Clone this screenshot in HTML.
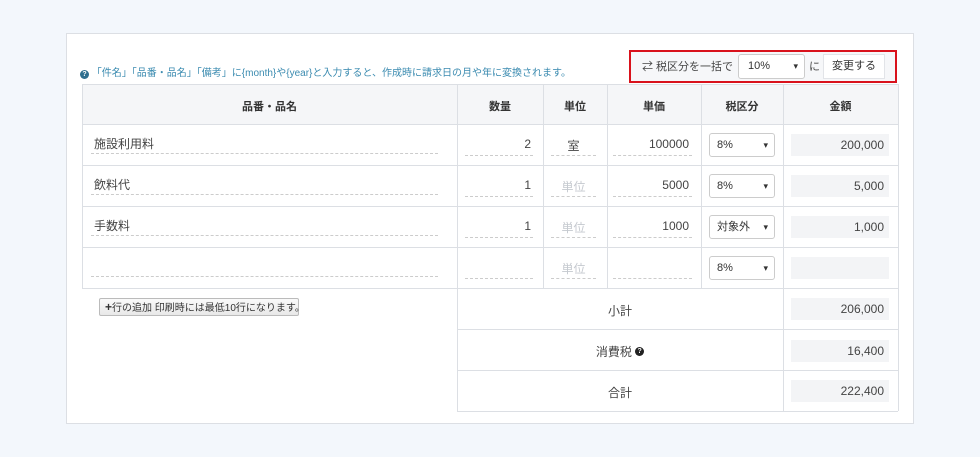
<!DOCTYPE html>
<html><head><meta charset="utf-8"><style>
*{box-sizing:border-box;margin:0;padding:0}
body{width:980px;height:457px;background:#f3f7fc;font-family:"Liberation Sans","Noto Sans CJK JP",sans-serif;position:relative;overflow:hidden;color:#333}
.a{position:absolute}
.panel{left:66px;top:33px;width:848px;height:391px;background:#fff;border:1px solid #dcdfe4}
.info{left:80px;top:64px;font-size:10px;color:#3b8bb0;white-space:nowrap}
.q{display:inline-block;width:9px;height:9px;border-radius:50%;background:#2f6f8f;color:#fff;font-size:7px;line-height:9px;text-align:center;font-weight:bold;vertical-align:0}
.red{left:629px;top:50px;width:268px;height:33px;border:2px solid #d9121c;background:#f6f7f9}
.vl{background:#dcdfe4;width:1px}
.hl{background:#dcdfe4;height:1px}
.th{font-size:11px;font-weight:bold;text-align:center;top:98px;color:#333}
.in{border-bottom:1px dashed #ccc;height:1px}
.t{font-size:12px;color:#444;white-space:nowrap}
.sel{width:66px;height:24px;border:1px solid #ccc;border-radius:3px;background:#fff;font-size:11px;line-height:22px;padding-left:7px;color:#333}
.sel:after{content:"▾";position:absolute;right:6px;top:0;font-size:9px}
.amt{left:791px;width:98px;height:22px;background:#f3f4f6;font-size:12px;text-align:right;padding-right:5px;line-height:22px;color:#444}
</style></head><body>
<div class="a panel"></div>
<div class="a info"><span class="q">?</span> 「件名」「品番・品名」「備考」に{month}や{year}と入力すると、作成時に請求日の月や年に変換されます。</div>
<div class="a red"></div>
<div class="a t" style="left:642px;top:58px;font-size:11px">⇄ 税区分を一括で</div>
<div class="a sel" style="left:738px;top:54px;width:67px;height:25px;line-height:23px;padding-left:9px">10%</div>
<div class="a t" style="left:809px;top:58px;font-size:11px">に</div>
<div class="a" style="left:823px;top:54px;width:62px;height:25px;background:#fff;border:1px solid #e2e4e8;font-size:11px;text-align:center;line-height:23px">変更する</div>
<!-- table -->
<div class="a" style="left:82px;top:84px;width:816px;height:40px;background:#f5f6f8"></div>
<div class="a hl" style="left:82px;top:84px;width:816px"></div>
<div class="a hl" style="left:82px;top:124px;width:816px"></div>
<div class="a hl" style="left:82px;top:165px;width:816px"></div>
<div class="a hl" style="left:82px;top:206px;width:816px"></div>
<div class="a hl" style="left:82px;top:247px;width:816px"></div>
<div class="a hl" style="left:82px;top:288px;width:816px"></div>
<div class="a hl" style="left:457px;top:329px;width:441px"></div>
<div class="a hl" style="left:457px;top:370px;width:441px"></div>
<div class="a hl" style="left:457px;top:411px;width:441px"></div>
<div class="a vl" style="left:82px;top:84px;height:204px"></div>
<div class="a vl" style="left:457px;top:84px;height:327px"></div>
<div class="a vl" style="left:543px;top:84px;height:204px"></div>
<div class="a vl" style="left:607px;top:84px;height:204px"></div>
<div class="a vl" style="left:701px;top:84px;height:204px"></div>
<div class="a vl" style="left:783px;top:84px;height:327px"></div>
<div class="a vl" style="left:898px;top:84px;height:327px"></div>
<div class="a th" style="left:82px;width:375px">品番・品名</div>
<div class="a th" style="left:457px;width:86px">数量</div>
<div class="a th" style="left:543px;width:64px">単位</div>
<div class="a th" style="left:607px;width:94px">単価</div>
<div class="a th" style="left:701px;width:82px">税区分</div>
<div class="a th" style="left:783px;width:115px">金額</div>
<!-- rows -->
<div class="a in" style="left:91px;top:153px;width:347px"></div>
<div class="a in" style="left:91px;top:194px;width:347px"></div>
<div class="a in" style="left:91px;top:235px;width:347px"></div>
<div class="a in" style="left:91px;top:276px;width:347px"></div>
<div class="a t" style="left:94px;top:135px">施設利用料</div>
<div class="a t" style="left:94px;top:176px">飲料代</div>
<div class="a t" style="left:94px;top:217px">手数料</div>

<div class="a in" style="left:465px;top:155px;width:68px"></div>
<div class="a in" style="left:465px;top:196px;width:68px"></div>
<div class="a in" style="left:465px;top:237px;width:68px"></div>
<div class="a in" style="left:465px;top:278px;width:68px"></div>
<div class="a t" style="left:465px;width:66px;text-align:right;top:137px">2</div>
<div class="a t" style="left:465px;width:66px;text-align:right;top:178px">1</div>
<div class="a t" style="left:465px;width:66px;text-align:right;top:219px">1</div>

<div class="a in" style="left:551px;top:155px;width:45px"></div>
<div class="a in" style="left:551px;top:196px;width:45px"></div>
<div class="a in" style="left:551px;top:237px;width:45px"></div>
<div class="a in" style="left:551px;top:278px;width:45px"></div>
<div class="a t" style="left:551px;width:45px;text-align:center;top:137px">室</div>
<div class="a t" style="left:551px;width:45px;text-align:center;top:178px;color:#c5c9cf">単位</div>
<div class="a t" style="left:551px;width:45px;text-align:center;top:219px;color:#c5c9cf">単位</div>
<div class="a t" style="left:551px;width:45px;text-align:center;top:260px;color:#c5c9cf">単位</div>

<div class="a in" style="left:613px;top:155px;width:79px"></div>
<div class="a in" style="left:613px;top:196px;width:79px"></div>
<div class="a in" style="left:613px;top:237px;width:79px"></div>
<div class="a in" style="left:613px;top:278px;width:79px"></div>
<div class="a t" style="left:613px;width:76px;text-align:right;top:137px">100000</div>
<div class="a t" style="left:613px;width:76px;text-align:right;top:178px">5000</div>
<div class="a t" style="left:613px;width:76px;text-align:right;top:219px">1000</div>

<div class="a sel" style="left:709px;top:133px">8%</div>
<div class="a sel" style="left:709px;top:174px">8%</div>
<div class="a sel" style="left:709px;top:215px">対象外</div>
<div class="a sel" style="left:709px;top:256px">8%</div>

<div class="a amt" style="top:134px">200,000</div>
<div class="a amt" style="top:175px">5,000</div>
<div class="a amt" style="top:216px">1,000</div>
<div class="a amt" style="top:257px"></div>
<div class="a amt" style="top:298px">206,000</div>
<div class="a amt" style="top:340px">16,400</div>
<div class="a amt" style="top:380px">222,400</div>

<div class="a t" style="left:457px;width:326px;text-align:center;top:302px">小計</div>
<div class="a t" style="left:457px;width:326px;text-align:center;top:343px">消費税 <span class="q" style="background:#222;vertical-align:3px">?</span></div>
<div class="a t" style="left:457px;width:326px;text-align:center;top:384px">合計</div>

<div class="a" style="left:99px;top:298px;width:200px;height:18px;border:1px solid #bbb;border-radius:2px;background:linear-gradient(#fafafa,#e8e8e8);font-size:10px;line-height:16px;padding-left:5px;white-space:nowrap;color:#333"><b style="font-size:12px">+</b>行の追加 印刷時には最低10行になります。</div>
</body></html>
